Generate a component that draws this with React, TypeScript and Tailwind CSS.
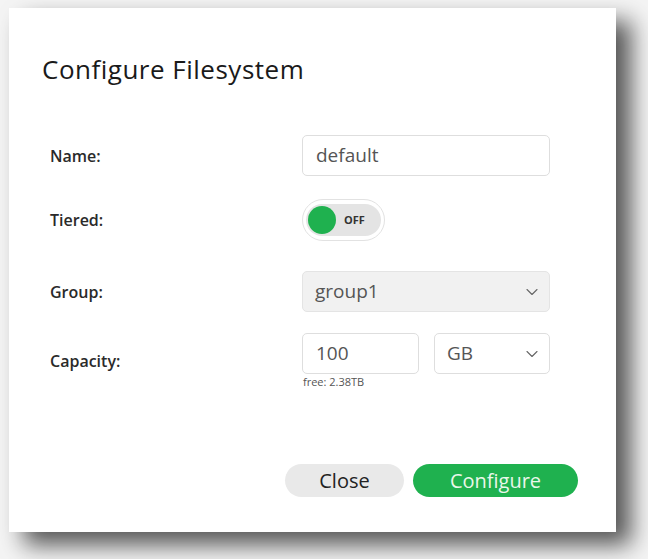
import { ChevronDown } from 'lucide-react';

export default function App() {
  return (
    <div className="w-[648px] h-[559px] bg-[#f4f4f4] pt-[8px] pl-[9px] overflow-hidden" style={{ fontFamily: '"Open Sans", "Noto Sans", sans-serif' }}>
      <div className="w-[607px] h-[524px] bg-white shadow-[15px_13px_22px_rgba(0,0,0,0.65)] flex flex-col">
        <h1 className="mt-[45px] ml-[33px] text-[26px] leading-[32px] text-[#1a1a1a] tracking-[0.5px]">Configure Filesystem</h1>

        <div className="mt-[50px] ml-[41px] flex flex-col">
          <div className="flex items-center h-[41px]">
            <div className="w-[252px] text-[16px] font-semibold text-[#2a2a2a]">Name:</div>
            <div className="w-[248px] h-[41px] border border-[#dedede] rounded-[5px] px-[13px] flex items-center text-[19px] text-[#555]">default</div>
          </div>

          <div className="flex items-center h-[42px] mt-[23px]">
            <div className="w-[252px] text-[16px] font-semibold text-[#2a2a2a]">Tiered:</div>
            <div className="w-[83px] h-[42px] rounded-full border border-[#e2e2e2] bg-white flex items-center justify-center">
              <div className="w-[75px] h-[32px] rounded-full bg-[#e4e4e4] flex items-center pl-[2px]">
                <div className="w-[28px] h-[28px] rounded-full bg-[#1fb14f]" />
                <span className="ml-[8px] text-[11px] font-bold text-[#333]">OFF</span>
              </div>
            </div>
          </div>

          <div className="flex items-center h-[41px] mt-[30px]">
            <div className="w-[252px] text-[16px] font-semibold text-[#2a2a2a]">Group:</div>
            <div className="w-[248px] h-[41px] border border-[#e4e4e4] bg-[#f1f1f1] rounded-[5px] pl-[12px] pr-[7px] flex items-center justify-between text-[19px] text-[#555]">
              <span>group1</span>
              <ChevronDown size={20} strokeWidth={1.3} className="text-[#666]" />
            </div>
          </div>

          <div className="flex items-center mt-[21px]">
            <div className="w-[252px] text-[16px] font-semibold text-[#2a2a2a]">Capacity:</div>
            <div className="flex flex-col">
              <div className="flex gap-[15px]">
                <div className="w-[117px] h-[41px] border border-[#dedede] rounded-[5px] px-[13px] flex items-center text-[19px] text-[#555]">100</div>
                <div className="w-[116px] h-[41px] border border-[#dedede] rounded-[5px] pl-[12px] pr-[7px] flex items-center justify-between text-[19px] text-[#555]">
                  <span>GB</span>
                  <ChevronDown size={20} strokeWidth={1.3} className="text-[#666]" />
                </div>
              </div>
              <div className="text-[11px] leading-[14px] mt-[1px] ml-[1px] text-[#555]">free: 2.38TB</div>
            </div>
          </div>
        </div>

        <div className="mt-auto mb-[35px] mr-[38px] flex justify-end gap-[9px]">
          <button className="w-[119px] h-[33px] rounded-full bg-[#e9e9e9] text-[20px] text-[#222]">Close</button>
          <button className="w-[165px] h-[33px] rounded-full bg-[#1fb14f] text-[20px] text-[#eaf7ea]">Configure</button>
        </div>
      </div>
    </div>
  );
}
